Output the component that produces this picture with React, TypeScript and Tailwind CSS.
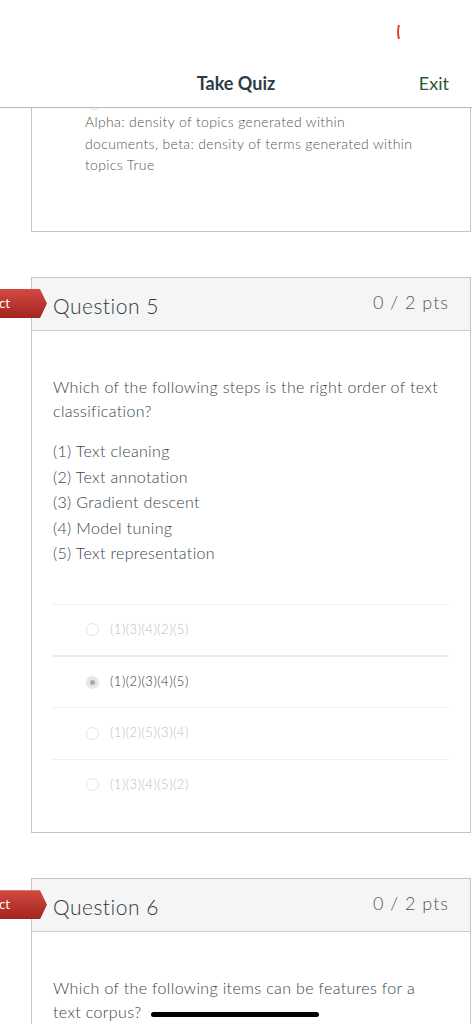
import React from "react";

type Answer = { label: string; selected?: boolean };

const q5Answers: Answer[] = [
  { label: "(1)(3)(4)(2)(5)" },
  { label: "(1)(2)(3)(4)(5)", selected: true },
  { label: "(1)(2)(5)(3)(4)" },
  { label: "(1)(3)(4)(5)(2)" },
];

const steps = [
  "(1) Text cleaning",
  "(2) Text annotation",
  "(3) Gradient descent",
  "(4) Model tuning",
  "(5) Text representation",
];

function Ribbon() {
  return (
    <div className="absolute left-[-92px] top-[11px] flex h-[29px] w-[107px] items-center justify-end bg-linear-to-b from-[#d24a42] to-[#a3241e] pr-[37px] text-[13px] text-white [clip-path:polygon(0_0,calc(100%-7px)_0,100%_50%,calc(100%-7px)_100%,0_100%)]">
      Incorrect
    </div>
  );
}

function QuestionHeader({ n }: { n: number }) {
  return (
    <div className="relative flex h-[53px] items-start justify-between border-b border-[#c7cdd1] bg-[#f5f5f5] pl-[21px] pr-[21px]">
      <Ribbon />
      <span className="mt-[15px] text-[21px] font-light leading-[26px] tracking-[0.5px] text-[#2d3b45]">
        Question {n}
      </span>
      <span className="mt-[12px] text-[18px] font-light leading-[24px] tracking-[1px] text-[#555]">
        0 / 2 pts
      </span>
    </div>
  );
}

function Radio({ selected }: { selected?: boolean }) {
  return (
    <span
      className={
        "flex h-[13px] w-[13px] items-center justify-center rounded-full " +
        (selected ? "bg-[#e6e6e6]" : "border border-[#e3e3e3] bg-white")
      }
    >
      {selected && <span className="h-[5px] w-[5px] rounded-full bg-[#aaa]" />}
    </span>
  );
}

export default function App() {
  return (
    <div className="min-h-[1024px] w-[472px] overflow-hidden bg-white font-['Lato','Open_Sans',sans-serif]">
      {/* top bar */}
      <div className="relative z-10 h-[108px] border-b border-[#b9b9b9] bg-white">
        <svg
          className="absolute left-[394px] top-[24px]"
          width="8"
          height="16"
          viewBox="0 0 8 16"
        >
          <path d="M5 1 Q3 8 5 15" stroke="#e5432d" strokeWidth="2" fill="none" />
        </svg>
        <div className="flex h-full items-start pt-[71px]">
          <div className="flex-1 text-center text-[18px] font-bold leading-[24px] text-[#2d3b45]">
            Take Quiz
          </div>
        </div>
        <a className="absolute right-[23px] top-[71px] text-[18px] leading-[24px] text-[#2b5b30]">
          Exit
        </a>
      </div>

      <div className="pl-[31px] pr-[1px]">
        {/* previous card, scrolled */}
        <div className="h-[124px] overflow-hidden border-x border-b border-[#c4c4c4] pl-[53px] pr-[10px]">
          <div className="-mt-[12px] ml-[2px] h-[14px] w-[14px] rounded-full border border-[#e0e0e0]" />
          <p className="mt-[1px] text-[14px] font-light leading-[21.5px] tracking-[0.35px] text-[#555]">
            Alpha: density of topics generated within
            <br />
            documents, beta: density of terms generated within
            <br />
            topics True
          </p>
        </div>

        {/* question 5 */}
        <div className="relative mt-[45px] border border-[#c4c4c4]">
          <QuestionHeader n={5} />
          <div className="px-[21px] pb-[22px] pt-[44px]">
            <p className="text-[16px] font-light leading-[24px] tracking-[0.35px] text-[#38444c]">
              Which of the following steps is the right order of text
              <br />
              classification?
            </p>
            <div className="mt-[15px] text-[16px] font-light leading-[25.5px] tracking-[0.35px] text-[#38444c]">
              {steps.map((s) => (
                <div key={s}>{s}</div>
              ))}
            </div>
            <div className="mt-[38px]">
              {q5Answers.map((a, i) => (
                <div
                  key={a.label}
                  className={
                    "flex h-[51.7px] items-center gap-[11px] pl-[33px] " +
                    (i === 1 ? "border-t-2 border-[#ececec]" : "border-t border-[#efefef]")
                  }
                >
                  <Radio selected={a.selected} />
                  <span
                    className={
                      "text-[13px] font-light tracking-[0.5px] " +
                      (a.selected ? "text-[#333]" : "text-[#bdbdbd]")
                    }
                  >
                    {a.label}
                  </span>
                </div>
              ))}
            </div>
          </div>
        </div>

        {/* question 6 */}
        <div className="relative mt-[45px] border border-[#c4c4c4]">
          <QuestionHeader n={6} />
          <div className="px-[21px] pb-[21px] pt-[44px]">
            <p className="text-[16px] font-light leading-[24px] tracking-[0.35px] text-[#38444c]">
              Which of the following items can be features for a
              <br />
              text corpus?
              <span className="ml-[10px] inline-block h-[5px] w-[168px] rounded-full bg-black align-middle" />
            </p>
          </div>
        </div>
      </div>
    </div>
  );
}
